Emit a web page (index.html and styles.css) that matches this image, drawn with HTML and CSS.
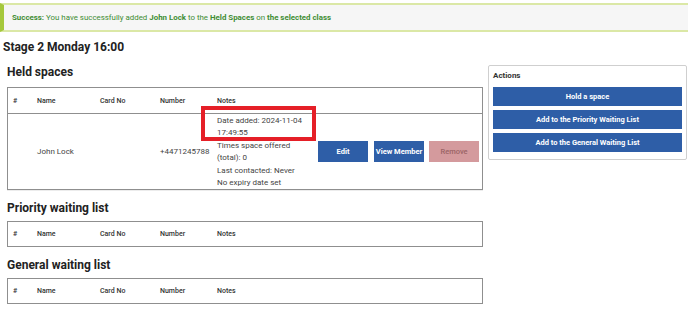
FILE: index.html
```html
<!DOCTYPE html>
<html>
<head>
<meta charset="utf-8">
<link rel="stylesheet" href="styles.css">
</head>
<body>
<div class="alert"><b>Success:</b>&nbsp;You have successfully added&nbsp;<b>John Lock</b>&nbsp;to the&nbsp;<b>Held Spaces</b>&nbsp;on&nbsp;<b>the selected class</b></div>
<h1 class="title">Stage 2 Monday 16:00</h1>
<div class="content">
  <div class="main">
    <h2 class="section-title">Held spaces</h2>
    <div class="list held">
      <div class="row head">
        <div class="c1">#</div><div class="c2">Name</div><div class="c3">Card No</div><div class="c4">Number</div><div class="c5">Notes</div><div class="c6"></div>
      </div>
      <div class="row body">
        <div class="c1"></div><div class="c2">John Lock</div><div class="c3"></div><div class="c4">+4471245788</div>
        <div class="c5 notes">Date added: 2024-11-04 17:49:55<br>Times space offered (total): 0<br>Last contacted: Never<br>No expiry date set</div>
        <div class="c6 btns"><span class="btn">Edit</span><span class="btn">View Member</span><span class="btn remove">Remove</span></div>
      </div>
      <div class="highlight"></div>
    </div>
    <h2 class="section-title sub">Priority waiting list</h2>
    <div class="list">
      <div class="row head last">
        <div class="c1">#</div><div class="c2">Name</div><div class="c3">Card No</div><div class="c4">Number</div><div class="c5">Notes</div><div class="c6"></div>
      </div>
    </div>
    <h2 class="section-title sub">General waiting list</h2>
    <div class="list">
      <div class="row head last">
        <div class="c1">#</div><div class="c2">Name</div><div class="c3">Card No</div><div class="c4">Number</div><div class="c5">Notes</div><div class="c6"></div>
      </div>
    </div>
  </div>
  <div class="actions">
    <div class="actions-title">Actions</div>
    <span class="abtn">Hold a space</span>
    <span class="abtn">Add to the Priority Waiting List</span>
    <span class="abtn">Add to the General Waiting List</span>
  </div>
</div>
</body>
</html>
```
FILE: styles.css
```css
* { box-sizing: border-box; }
body {
  margin: 0;
  font-family: Roboto, "Liberation Sans", sans-serif;
  color: #333;
  background: #fff;
}
.alert {
  margin-top: 3px;
  height: 29px;
  background: #f6f6f6;
  border-top: 2px solid #dbe8a6;
  border-bottom: 2px solid #dbe8a6;
  border-left: 4px solid #a5c83c;
  padding-left: 8px;
  display: flex;
  align-items: center;
  font-size: 7.9px;
  color: #3f8d33;
  white-space: nowrap;
}
.alert b { font-weight: 700; }
.title {
  margin: 7px 0 0 3px;
  font-size: 12px;
  line-height: 16px;
  font-weight: 700;
  color: #222;
}
.content {
  display: flex;
  gap: 5px;
  padding-left: 7px;
  margin-top: 9px;
}
.main { width: 476px; }
.section-title {
  margin: 0 0 7px 0;
  font-size: 12px;
  line-height: 16px;
  font-weight: 700;
  color: #222;
}
.section-title.sub { margin-bottom: 5px; }
.list {
  position: relative;
  border: 1px solid #8f8f8f;
  margin-bottom: 10px;
}
.list.held { box-shadow: 0 1px 0 #ececec; margin-bottom: 10px; }
.row {
  display: grid;
  grid-template-columns: 24px 63px 60px 57px 101px 1fr;
  font-size: 7.5px;
  align-items: center;
}
.row > div { padding-left: 5px; }
.head { height: 26px; border-bottom: 1px solid #8f8f8f; font-weight: 500; color: #333; font-size: 7px; }
.head.last { height: 24px; border-bottom: none; }
.body { height: 75px; font-size: 8px; color: #444; }
.notes { line-height: 12.4px; padding-top: 1px; }
.btns { display: flex; gap: 6px; }
.row > .btns { padding-left: 5px; }
.btn {
  width: 50px;
  height: 21px;
  background: #2e5ea7;
  color: #fff;
  font-weight: 700;
  font-size: 7.5px;
  display: flex;
  align-items: center;
  justify-content: center;
  white-space: nowrap;
}
.btn.remove { background: #d49a9d; color: #9b6466; font-weight: 500; margin-left: -1px; }
.highlight {
  position: absolute;
  left: 193px;
  top: 18px;
  width: 115px;
  height: 35px;
  border: 4px solid #e51f27;
}
.actions {
  width: 199px;
  align-self: flex-start;
  margin-top: 1px;
  border: 1px solid #cfcfcf;
  border-radius: 2px;
  padding: 4px 4px 7px 4px;
  display: flex;
  flex-direction: column;
  gap: 4px;
}
.actions-title {
  font-size: 8px;
  font-weight: 700;
  color: #333;
  line-height: 12px;
  margin-bottom: 1px;
}
.abtn {
  height: 19px;
  background: #2e5ea7;
  color: #fff;
  font-weight: 700;
  font-size: 7.5px;
  display: flex;
  align-items: center;
  justify-content: center;
}
```
